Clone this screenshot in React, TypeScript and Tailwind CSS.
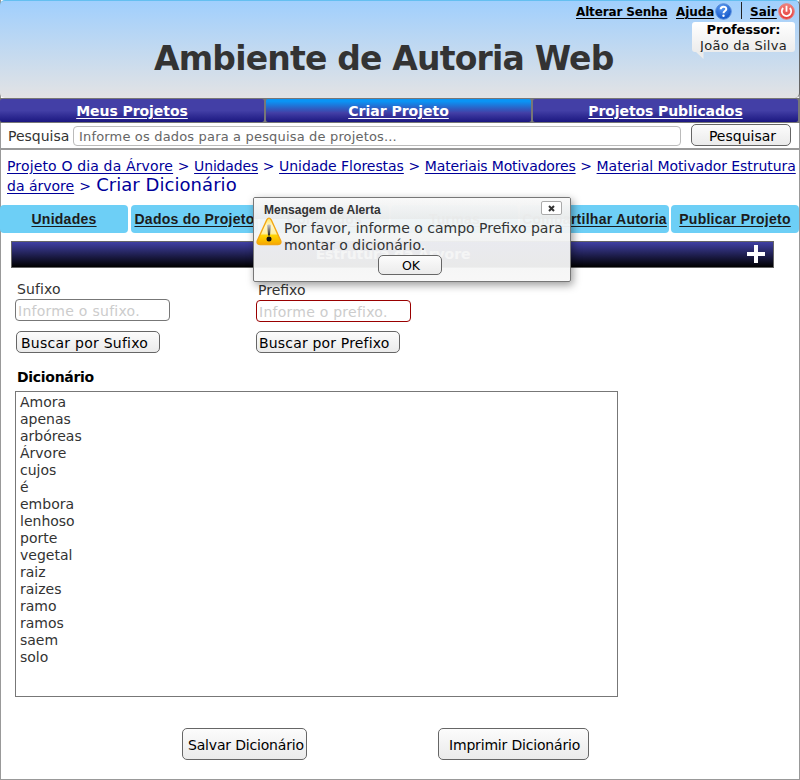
import React from "react";

const words = ["Amora", "apenas", "arbóreas", "Árvore", "cujos", "é", "embora", "lenhoso", "porte", "vegetal", "raiz", "raizes", "ramo", "ramos", "saem", "solo"];

const button =
  "block shrink-0 whitespace-nowrap rounded-[5px] border border-[#666] bg-linear-to-b/srgb from-[#fcfcfc] via-[#f3f3f3] to-[#ebebeb] text-black";

function HelpIcon() {
  return (
    <svg width="17" height="17" viewBox="0 0 17 17">
      <defs>
        <radialGradient id="help" cx=".4" cy=".25" r=".8">
          <stop offset="0" stopColor="#5d9cf2" />
          <stop offset="1" stopColor="#0c4fc4" />
        </radialGradient>
      </defs>
      <circle cx="8.5" cy="8.5" r="7.8" fill="url(#help)" stroke="#5b8fdc" />
      <path d="M5.7 6.2C5.8 2.9 11.4 2.9 11.3 6.1C11.2 8 8.5 8 8.5 10.2" fill="none" stroke="#fff" strokeWidth="2" />
      <circle cx="8.5" cy="12.7" r="1.2" fill="#fff" />
    </svg>
  );
}

function PowerIcon() {
  return (
    <svg width="17" height="17" viewBox="0 0 17 17">
      <defs>
        <linearGradient id="power" x1="0" y1="0" x2="0" y2="1">
          <stop offset="0" stopColor="#f0807c" />
          <stop offset="1" stopColor="#e63a38" />
        </linearGradient>
      </defs>
      <circle cx="8.5" cy="8.5" r="7.8" fill="url(#power)" stroke="#e8807c" />
      <path d="M5.2 5A4.7 4.7 0 1 0 11.8 5M8.5 2.8v6" fill="none" stroke="#fff" strokeWidth="1.8" />
    </svg>
  );
}

function WarningIcon() {
  return (
    <svg width="26" height="29" viewBox="0 0 26 29">
      <defs>
        <linearGradient id="warn" x1="0" y1="0" x2="0" y2="1">
          <stop offset="0" stopColor="#ffe45a" />
          <stop offset=".3" stopColor="#fff6c8" />
          <stop offset=".58" stopColor="#fff0a0" />
          <stop offset=".66" stopColor="#ffd400" />
          <stop offset="1" stopColor="#f6a800" />
        </linearGradient>
        <linearGradient id="mark" x1="0" y1="0" x2="0" y2="1">
          <stop offset="0" stopColor="#ccc" />
          <stop offset="1" stopColor="#222" />
        </linearGradient>
      </defs>
      <path d="M10.8 2.8Q13 -.6 15.2 2.8L24.8 24Q25.6 27.5 22 27.5H4Q.4 27.5 1.2 24Z" fill="url(#warn)" stroke="#f3a712" strokeWidth="1.4" />
      <path d="M11.2 8Q13 6.5 14.8 8L14 18.5H12Z" fill="url(#mark)" />
      <circle cx="13" cy="22" r="2.5" fill="#111" />
    </svg>
  );
}

function Crumb({ children, className = "" }: { children: React.ReactNode; className?: string }) {
  return <a className={`underline underline-offset-2 ${className}`}>{children}</a>;
}

function Separator({ className = "w-[21px]" }: { className?: string }) {
  return <span className={`inline-block text-center ${className}`}>&gt;</span>;
}

const tab =
  "flex h-7 shrink-0 items-center justify-center whitespace-nowrap rounded-[4px] bg-[#6dcff6] font-['Liberation_Sans',sans-serif] text-[14px] font-bold tracking-[0.26px] text-[#1c1c1c] underline underline-offset-2";

function AlertDialog() {
  return (
    <div className="absolute left-[253px] top-[197px] h-[85px] w-[318px] rounded-[2px] border border-[#777] bg-linear-to-b/srgb from-[#fafafa]/95 via-[#f2f3f3]/95 to-[#f7f7f7]/95 shadow-[2px_3px_8px_rgba(0,0,0,0.4)]">
      <div className="flex h-[21px] items-start justify-between bg-linear-to-b/srgb from-[#f8f8f8]/70 to-[#e6e8e8]/70 pl-[10px] pr-[8px] pt-[3px]">
        <span className="font-['Liberation_Sans',sans-serif] text-[12px] font-bold leading-[18px] tracking-[0.02px] text-[#333]">Mensagem de Alerta</span>
        <button className="flex h-[14px] w-[21px] items-center justify-center rounded-[2px] border border-[#aaa] bg-white">
          <svg width="7" height="7" viewBox="0 0 7 7">
            <path d="M1 1L6 6M6 1L1 6" stroke="#333" strokeWidth="2" />
          </svg>
        </button>
      </div>
      <div className="flex h-[36px] pl-[2px]">
        <div className="-mt-[2px] w-[28px] shrink-0"><WarningIcon /></div>
        <p className="mt-px whitespace-nowrap text-[14px] leading-[17px] text-[#333]">
          Por favor, informe o campo Prefixo para<br />montar o dicionário.
        </p>
      </div>
      <button className={`${button} ml-[124px] h-5 w-16 pl-[2px] text-[12.5px] leading-[20px]`}>OK</button>
    </div>
  );
}

export default function App() {
  return (
    <div className="relative h-[780px] w-[800px] overflow-hidden bg-white font-['DejaVu_Sans',sans-serif] text-[14px]">
      <div className="flex h-full flex-col border-x border-b border-[#999]">
        <header className="-mx-px flex h-[98px] shrink-0 justify-between rounded-[5px] border-r border-t border-t-[#64bff0] border-r-[#666] bg-linear-to-b/srgb from-[#a0cffd] to-[#e3e3e4] pl-[154px]">
          <h1 className="mt-[36px] w-[420px] shrink-0 whitespace-nowrap text-[33px] font-bold leading-[44px] tracking-[-0.8px] text-[#333]">Ambiente de Autoria Web</h1>
          <div className="w-[223px] shrink-0">
            <div className="flex h-[21px] items-start text-[12px] font-bold leading-[23px] text-black">
              <a className="w-[100px] whitespace-nowrap tracking-[-0.15px] underline underline-offset-2">Alterar Senha</a>
              <a className="w-[38px] whitespace-nowrap tracking-[-0.1px] underline underline-offset-2">Ajuda</a>
              <span className="ml-[1px] mt-[2px]"><HelpIcon /></span>
              <span className="ml-[9px] mt-[1px] h-[17px] w-px bg-[#222]" />
              <a className="ml-[8px] w-[28px] whitespace-nowrap underline underline-offset-2">Sair</a>
              <span className="mt-[2px]"><PowerIcon /></span>
            </div>
            <div className="relative ml-[116px] h-[30px] w-[103px] rounded-[3px] bg-linear-to-b/srgb from-white to-[#ececec] text-center text-[13px] leading-[15px] text-[#222]">
              <b className="block tracking-[-0.15px] text-black">Professor:</b>
              <span className="block pt-px tracking-[0.27px]">João da Silva</span>
              <svg className="absolute left-[4px] top-[30px]" width="8" height="8"><path d="M0 0H7.5V7Z" fill="#ececec" /></svg>
            </div>
          </div>
        </header>
        <nav className="-mx-px flex h-[25px] shrink-0 border-y border-[#777] bg-[#777] text-center text-[14px] font-bold leading-[24px] text-white">
          <a className="w-[264px] rounded-[2px] bg-linear-to-b/srgb from-[#433fa6] from-50% to-[#1b1780] tracking-[-0.06px] underline underline-offset-2">Meus Projetos</a>
          <a className="ml-[2px] w-[265px] rounded-[2px] bg-linear-to-b/srgb from-[#0a94f5] from-10% via-[#433fa6] via-60% to-[#1b1780] underline underline-offset-2">Criar Projeto</a>
          <a className="ml-[2px] w-[265px] rounded-[2px] bg-linear-to-b/srgb from-[#433fa6] from-50% to-[#1b1780] tracking-[-0.1px] underline underline-offset-2">Projetos Publicados</a>
        </nav>
        <div className="flex h-[27px] shrink-0 border-b-2 border-[#999] pl-[7px]">
          <span className="w-[65px] whitespace-nowrap leading-[26px] text-[#333]">Pesquisa</span>
          <div className="mt-[3px] h-5 w-[608px] rounded-[4px] border border-[#bbb] pl-[5px] text-[13px] leading-[19px] tracking-[0.17px] text-[#666]">Informe os dados para a pesquisa de projetos...</div>
          <button className={`${button} ml-[10px] mt-[1px] h-[22px] w-[100px] pl-[3px] text-[14px] leading-[22px]`}>Pesquisar</button>
        </div>
        <div className="h-[55px] shrink-0 whitespace-nowrap pl-[6px] pt-[7px] leading-[19px] text-[#000099]">
          <div className="h-[19px]">
            <Crumb className="tracking-[0.15px]">Projeto O dia da Árvore</Crumb><Separator />
            <Crumb className="tracking-[-0.17px]">Unidades</Crumb><Separator />
            <Crumb className="tracking-[-0.05px]">Unidade Florestas</Crumb><Separator />
            <Crumb className="tracking-[-0.17px]">Materiais Motivadores</Crumb><Separator />
            <Crumb className="tracking-[-0.06px]">Material Motivador Estrutura</Crumb>
          </div>
          <div className="-mt-px h-[19px]"><Crumb>da árvore</Crumb><Separator className="w-[22px]" /><span className="text-[18px] tracking-[0.05px]">Criar Dicionário</span></div>
        </div>
        <nav className="-mx-px flex h-[28px] shrink-0">
          <a className={`${tab} w-[128px]`}>Unidades</a>
          <a className={`${tab} ml-[3px] w-[127px]`}>Dados do Projeto</a>
          <a className={`${tab} ml-[2px] w-[129px]`}>Conteúdos</a>
          <a className={`${tab} ml-[2px] w-[127px]`}>Turmas</a>
          <a className={`${tab} ml-[2px] w-[149px]`}>Compartilhar Autoria</a>
          <a className={`${tab} ml-[2px] w-[128px]`}>Publicar Projeto</a>
        </nav>
        <div className="ml-[10px] mt-[8px] flex h-[27px] w-[763px] shrink-0 items-center justify-center border border-[#666] bg-linear-to-b/srgb from-[#4040a4] to-black font-bold text-white">
          <span className="ml-[28px] flex-1 text-center tracking-[-0.1px]">Estrutura da Árvore</span>
          <svg className="-mt-px mr-[7px]" width="20" height="20"><path d="M1 10H19M10 1V19" stroke="#fff" strokeWidth="4" /></svg>
        </div>
        <div className="ml-[14px] mt-[12px] flex shrink-0 text-[#333]">
          <div className="w-[240px] pl-px">
            <div className="pl-px leading-[18px] tracking-[0.1px]">Sufixo</div>
            <div className="-ml-px mt-[1px] h-[22px] w-[155px] rounded-[4px] border border-[#777] pl-[2px] leading-[22px] tracking-[0.27px] text-[#ccc]">Informe o sufixo.</div>
            <button className={`${button} mt-[10px] h-[22px] w-[144px] pl-[4px] text-left leading-[22px] tracking-[0.25px]`}>Buscar por Sufixo</button>
          </div>
          <div className="w-[240px] pl-px pt-px">
            <div className="pl-[2px] leading-[18px]">Prefixo</div>
            <div className="mt-[1px] h-[22px] w-[155px] rounded-[4px] border border-[#990000] pl-[2px] leading-[22px] tracking-[0.25px] text-[#ccc]">Informe o prefixo.</div>
            <button className={`${button} mt-[9px] h-[22px] w-[144px] pl-[2px] text-left leading-[22px] tracking-[0.17px]`}>Buscar por Prefixo</button>
          </div>
        </div>
        <h2 className="ml-[16px] mt-[15px] shrink-0 text-[14px] font-bold leading-[18px] tracking-[-0.3px] text-black">Dicionário</h2>
        <ul className="ml-[14px] mt-[5px] h-[306px] w-[603px] shrink-0 border border-[#777] pl-[4px] pt-[2px] leading-[17px] text-[#333]">
          {words.map((word) => <li key={word}>{word}</li>)}
        </ul>
        <div className="ml-[181px] mt-[31px] flex shrink-0">
          <button className={`${button} h-8 w-[125px] pl-[5px] text-left leading-[32px] tracking-[-0.18px]`}>Salvar Dicionário</button>
          <button className={`${button} ml-[131px] h-8 w-[151px] pl-[10px] text-left leading-[32px] tracking-[-0.18px]`}>Imprimir Dicionário</button>
        </div>
      </div>
      <AlertDialog />
    </div>
  );
}
